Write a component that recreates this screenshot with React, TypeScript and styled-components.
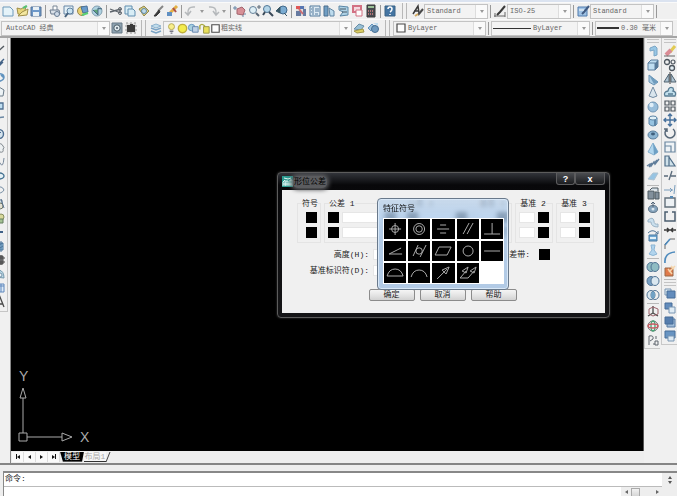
import React from "react";
import styled, { createGlobalStyle, css } from "styled-components";

const GlobalStyle = createGlobalStyle`
  * { box-sizing: border-box; }
  body {
    margin: 0;
    background: #f0f0f0;
    font-family: "Liberation Mono", "Noto Sans CJK SC", monospace;
    font-size: 7px;
    color: #222;
    overflow: hidden;
  }
  button, input, select { font: inherit; color: inherit; margin: 0; padding: 0; border: 0; background: none; border-radius: 0; }
`;

/* ---------- icon drawings, 14 x 14 ---------- */

const blue = "#4d86b8";
const pale = "#b9dcf2";
const navy = "#2d4f78";
const dark = "#3c444c";

const glyphs: Record<string, React.ReactNode> = {
  new: <path d="M2 3h7l3 3v6H2z" fill="#e4f4fb" stroke="#5d8fb5" />,
  open: <><path d="M2 4l4 1 5-3-2 9-6-1z" fill="#e7d26a" stroke="#958234" /><path d="M3 12l9-1 1-6-6 3z" fill="#f5e796" stroke="#958234" /><path d="M8 4l4-2" stroke="#4b6" strokeWidth="2" /></>,
  save: <><path d="M2 3h10v9H2z" fill="#5b8dc4" stroke="#40628d" /><path d="M4 3h6v3H4zM4 8h6v4H4z" fill="#e8f0f6" /></>,
  print: <><path d="M5 6V2h4v4" fill="#fff" stroke="#68788a" /><path d="M2 6h9l1 4H3z" fill="#d7dfe8" stroke="#5b6d82" /><circle cx="9" cy="10" r="2.5" fill="#cbd9e8" stroke="#566c86" /></>,
  preview: <><path d="M2 2h9v8H2z" fill="#e2f0f8" stroke="#55799c" /><circle cx="8" cy="7" r="3" fill="#c4e2f2" stroke="#4f7497" /><path d="M6 9l-3 4" stroke="#30506f" strokeWidth="2" /></>,
  publish: <><circle cx="6" cy="7" r="4.5" fill="#e7cc60" stroke="#8d7a39" /><path d="M5 3l6-1 1 6-5 1z" fill="#5791c7" stroke="#33608e" /><path d="M6 11l6-2" stroke="#4c6" strokeWidth="2" /></>,
  dwf: <><circle cx="7" cy="7" r="5" fill="#a8cfe0" stroke="#7395a8" /><path d="M3 6l5 5V4l4 1" fill="#4a9a6a" stroke="#357" /></>,
  cut: <><path d="M1 5l11 4M1 8l11-3" stroke="#4c535c" strokeWidth="1.3" /><circle cx="11" cy="5" r="1.5" fill="none" stroke="#4c535c" /><circle cx="11" cy="9" r="1.5" fill="none" stroke="#4c535c" /></>,
  copy: <><path d="M2 2h7v8H2z" fill="#d5edf7" stroke="#4f82a8" /><path d="M5 5h5l2 2v5H5z" fill="#d5edf7" stroke="#4f82a8" /></>,
  paste: <><path d="M2 5l5-3 5 5-5 5z" fill="#d5c86d" stroke="#887d3c" /><circle cx="7" cy="7" r="2.5" fill="#b8d9ea" stroke="#4c7a9d" /></>,
  brush: <><path d="M12 2L7 7" stroke="#777" strokeWidth="2" /><path d="M8 6l-5 6 2 0 4-4z" fill="#222" stroke="#222" /></>,
  pencil: <><path d="M12 2L5 9" stroke="#e2a82d" strokeWidth="3" /><path d="M8 4l3 4" stroke="#a13c37" strokeWidth="2" /><path d="M2 8h5v4H2z" fill="#4e83bd" /></>,
  undo: <path d="M11 3Q3 2 4 10M1 8l3 3 3-4" fill="none" stroke="#adb1b4" strokeWidth="1.5" />,
  redo: <path d="M3 3q8-1 7 7M7 7l3 4 3-3" fill="none" stroke="#adb1b4" strokeWidth="1.5" />,
  pan: <><path d="M2 2v4M0 4h4M10 8v5M8 10h5" stroke="#55799c" /><path d="M4 5l5-2 3 3-2 5-6-1z" fill="#d4828a" stroke="#9a525c" /></>,
  zoom: <><circle cx="6" cy="6" r="3.5" fill="#dceff7" stroke="#56748f" /><path d="M9 9l3 3" stroke="#456" strokeWidth="2" /><path d="M10 3h4M12 1v4" stroke="#456" /></>,
  zoomwin: <><circle cx="6" cy="5" r="3.5" fill="#acd2e7" stroke="#3b668b" /><path d="M8 8l4 4M4 8l-2 3" stroke="#234" strokeWidth="2" /></>,
  zoomprev: <><circle cx="8" cy="6" r="4" fill="#6ba3cf" stroke="#2c587f" /><path d="M1 7l4-4v6zM9 9l3 3" fill="#245" stroke="#245" /></>,
  props: <><path d="M2 2h10v10H2z" fill="#ddd" /><path d="M2 2h4v3H2z" fill="#d44" /><path d="M6 2h4v3H6z" fill="#46a" /><path d="M2 7h5v5H2zM9 5h3v7H9z" fill="#556b97" /><path d="M5 5l4 5" stroke="#ca5b62" strokeWidth="2" /></>,
  center: <><path d="M2 2h10v10H2z" fill="#dbeaf4" stroke="#3f6b92" /><path d="M5 3v8M7 5h4M7 7h4M7 10h3M3 5h1M3 8h1" stroke="#3f6b92" /></>,
  palette: <><path d="M2 2h4v10H2z" fill="#5f93bd" stroke="#355d80" /><path d="M7 4l5 3v5H8z" fill="#b7d9ed" stroke="#4b7597" /></>,
  sheet: <><path d="M3 2l9 1v8l-8 1 3-4-4-2z" fill="#a6cfe5" stroke="#47789c" /><path d="M4 5h6M6 8h5" stroke="#345" /></>,
  markup: <><path d="M3 2h8v6H3z" fill="#f5d5dc" stroke="#ce6074" strokeWidth="2" /><path d="M6 6h6v6H6z" fill="#fff" stroke="#ce6074" /></>,
  calc: <><path d="M3 1h8v12H3z" fill="#30343a" stroke="#222" /><path d="M4 3h6" stroke="#8fba8b" strokeWidth="2" /><path d="M4 7h6M4 10h6" stroke="#d57575" strokeWidth="1.5" strokeDasharray="1 1" /></>,
  help: <><path d="M2 2h10v10H2z" fill="#2d6599" stroke="#235078" /><path d="M5 5q0-2 2-2t2 2-2 3M7 10v1" fill="none" stroke="#fff" strokeWidth="1.5" /></>,
  textstyle: <><path d="M3 10L8 2l1 7M4 7h5" fill="none" stroke="#222" strokeWidth="1.5" /><path d="M13 5l-5 6" stroke="#333" strokeWidth="2" /><path d="M8 10l-3 2" stroke="#d0a14d" strokeWidth="2" /></>,
  dimstyle: <><path d="M1 12h11M2 9v4M12 8v5" stroke="#555" /><path d="M12 2L7 8l-3 3" stroke="#222" strokeWidth="2" fill="none" /></>,
  tablestyle: <><path d="M2 3h9v9H2z" fill="#95bde4" stroke="#3d6ca5" /><path d="M13 2L8 8l-2 2" stroke="#294773" strokeWidth="2" /><path d="M3 6h5" stroke="#fff" /></>,
  gear: <><path d="M2 2h10v10H2z" fill="#8199aa" stroke="#546979" /><circle cx="7" cy="7" r="3.2" fill="#dce7ed" stroke="#334854" /><circle cx="7" cy="7" r="1" fill="#345" /></>,
  workspace: <><path d="M2 2h10v10H2z" fill="#dadada" stroke="#8c8c8c" strokeDasharray="2 2" /><path d="M3 4h3V3h3v1h2v7H3z" fill="#222" /></>,
  layers: <><path d="M2 5l5-2 5 2-5 2z" fill="#bcdced" stroke="#7fa9c9" /><path d="M2 7l5 2 5-2M2 10l5 2 5-2" fill="none" stroke="#6a9ac0" strokeWidth="1.5" /></>,
  bulb: <><circle cx="7" cy="5" r="3.2" fill="#f9ee7c" stroke="#a99a3d" /><path d="M5 10h4M6 12h2" stroke="#667" strokeWidth="1.5" /></>,
  sun: <circle cx="7" cy="7" r="4.5" fill="#f3ec37" stroke="#b9a621" strokeWidth="1.5" />,
  freeze: <><circle cx="5" cy="6" r="3.5" fill="#9dccdd" stroke={blue} /><path d="M6 5h6v6H6z" fill="#b8cee5" stroke="#5378a4" /></>,
  lock: <><path d="M2 8V4q2-3 5 0v4" fill="none" stroke="#a1a12b" strokeWidth="1.5" /><path d="M6 5h6v7H6z" fill="#e7dd45" stroke="#89862b" /></>,
  swatch: <path d="M3 3h8v8H3z" fill="#fff" stroke="#333" strokeWidth="1.2" />,
  layerprev: <><path d="M2 8l5-5 5 2-3 4z" fill="#8db9d1" stroke="#55809e" /><path d="M2 10l9-2 1 3-7 1z" fill="#d9ca50" stroke="#968b34" /></>,
  layerstate: <><path d="M2 7l4-4 2 2-3 5z" fill="#94bdd9" stroke={blue} /><circle cx="9" cy="8" r="3.5" fill="#5f8fb8" stroke="#315d85" /><path d="M7 2h5v3" fill="#bddbed" /></>,

  line: <path d="M2 12L12 3" stroke={dark} strokeWidth="1.4" />,
  ray: <path d="M2 12L12 2M6 10l5-5" stroke={navy} strokeWidth="1.4" />,
  polyline: <path d="M4 3q8-1 8 3t-8 5M9 4l3 3" fill="none" stroke={blue} strokeWidth="1.5" />,
  polygon: <path d="M7 2l5 3-1 6H3L2 5z" fill="#edf4f7" stroke="#586b7b" />,
  rect: <path d="M2 4h9v6H2z" fill={pale} stroke="#385d84" strokeWidth="1.3" />,
  arc: <path d="M3 11q1-7 9-7" fill="none" stroke="#587999" strokeWidth="1.4" />,
  circle: <><circle cx="7" cy="7" r="4.5" fill="#d3e3ee" stroke="#365b83" strokeWidth="1.4" /><path d="M5 9l4-4" stroke="#365b83" /></>,
  cloud: <path d="M4 11q-3-1-1-4 0-3 3-3 3-3 5 1 2 2 0 3 1 4-3 3z" fill="#edf0f2" stroke="#707980" />,
  spline: <path d="M2 11q3-9 6-3t4-5" fill="none" stroke="#687b91" />,
  ellipse: <ellipse cx="7" cy="7" rx="5" ry="3" fill="#e3f1f7" stroke="#2d6185" strokeWidth="1.4" />,
  ellarc: <path d="M3 10q7 1 9-3-2-5-8-2" fill="none" stroke="#66819a" />,
  insert: <><path d="M3 3h7v6H3z" fill="#cddce4" stroke="#607785" /><circle cx="8" cy="9" r="3" fill="#e2ded0" stroke="#5e6755" /><path d="M9 2l3 9" stroke="#486586" /></>,
  block: <><circle cx="9" cy="6" r="3" fill="#d5d58f" stroke="#78804c" /><path d="M5 8h6v4H5z" fill="#9bbc88" stroke="#536f4c" /></>,
  point: <path d="M7 7h4" stroke="#284e79" strokeWidth="2" />,
  hatch: <><path d="M3 4h8v7H3z" fill="#8abde1" stroke="#36658e" /><path d="M3 8l8-4M5 11l6-4M9 2v11" stroke="#36658e" /></>,
  gradient: <><path d="M3 3h8v8H3z" fill="#72767b" stroke="#333" /><path d="M9 2v10M3 5h10M3 9h10" stroke="#333" /></>,
  region: <><path d="M3 10q-2-6 4-7 5 1 5 8z" fill="#b5d8e8" stroke="#658ba1" /><circle cx="8" cy="8" r="2" fill="#edf5f8" stroke="#6687a0" /></>,
  table: <><path d="M2 3h10v8H2z" fill="#daeaf9" stroke="#4c7bb6" /><path d="M2 5h10M6 3v8M9 3v8" stroke="#4c7bb6" /></>,
  mtext: <path d="M4 12L8 2l4 10M5 9h6" fill="none" stroke="#333" strokeWidth="1.3" />,

  polysolid: <path d="M4 4l5-2 2 2v7l-3 1V6L4 7z" fill="#8dc2e4" stroke="#6b9cc0" />,
  box: <><path d="M2 5l3-3h7v7l-3 3H2z" fill={pale} stroke="#476f92" /><path d="M9 5l3-3v7l-3 3z" fill="#446b8e" /><path d="M2 5h7v7" fill="none" stroke="#476f92" /></>,
  wedge: <><path d="M3 3v7l5 3 4-3z" fill="#a3cae4" stroke="#5887ab" /><path d="M3 3l9 7-4 2z" fill="#5e91b7" /></>,
  cone: <path d="M7 1l4 9q-4 3-8 0z" fill="#d6e4ed" stroke="#64809a" />,
  sphere: <><circle cx="7" cy="7" r="5" fill="#8bb7d8" stroke="#5c87ab" /><circle cx="5.5" cy="5" r="2.2" fill="#dceefa" /></>,
  cylinder: <><path d="M3 4v6q4 4 8 0V4z" fill="#8abde0" stroke="#48779d" /><ellipse cx="7" cy="4" rx="4" ry="2" fill="#e0f0f9" stroke="#48779d" /><path d="M9 6v6" stroke="#48779d" strokeWidth="2" /></>,
  torus: <><ellipse cx="7" cy="7" rx="5" ry="4" fill="#7fadcf" stroke="#456f92" /><ellipse cx="7" cy="6" rx="2" ry="1.4" fill="#264c6e" /></>,
  pyramid: <><path d="M7 1l5 9-4 3-6-3z" fill="#a8d3ee" stroke="#78a8ca" /><path d="M7 1l5 9-4 3z" fill="#5d96bf" /></>,
  helix: <path d="M1 10l3-2 1 2 3-4 1 2 4-5M3 11l3-4M8 8l3-4" fill="none" stroke="#4e6f90" strokeWidth="1.5" />,
  plane: <path d="M2 9l5-6h5l-4 7z" fill="#8bbfe2" stroke="#a5bccd" />,
  extrude: <><path d="M2 4h6v8H2zM9 5h4v7H9z" fill="#738391" stroke="#39464f" /><path d="M4 3l2-2h6v3" fill="#d6e2eb" stroke="#39464f" /></>,
  presspull: <><ellipse cx="7" cy="8" rx="4.5" ry="3.5" fill="#7799b5" stroke="#4c657b" /><path d="M7 1v6M5 3l2-2 2 2" stroke="#3c5167" fill="none" /><circle cx="7" cy="8" r="1.5" fill="#d6e5ef" /></>,
  sweep: <path d="M2 5q5-4 6 1 0 4 4 3v3q-7 0-7-5H2z" fill="#c5dded" stroke="#91acc1" />,
  revolve: <><path d="M3 6h8v6H3z" fill="#5d9dce" stroke="#346d99" /><path d="M2 4q4-4 8-1l2 2M9 5h3V2" fill="none" stroke="#40698c" /><path d="M4 9h6" stroke="#e0f0f8" strokeWidth="2" /></>,
  loft: <path d="M5 2h4l-1 5 3 4q-4 3-8 0l3-4z" fill="#a9d1ed" stroke="#7eacd0" />,
  union: <><ellipse cx="5" cy="7" rx="4" ry="4.5" fill="#82b5bd" stroke="#3c6388" /><ellipse cx="9" cy="7" rx="4" ry="4.5" fill="#82b5bd" stroke="#3c6388" /></>,
  subtract: <><ellipse cx="5" cy="7" rx="4" ry="4.5" fill="#6796be" stroke="#3c6388" /><ellipse cx="9" cy="7" rx="4" ry="4.5" fill="#d7e6ef" stroke="#3c6388" /></>,
  intersect: <><ellipse cx="5" cy="7" rx="4" ry="4.5" fill="#d7e6ef" stroke="#3c6388" /><ellipse cx="9" cy="7" rx="4" ry="4.5" fill="none" stroke="#3c6388" /><ellipse cx="7" cy="7" rx="1.8" ry="3.5" fill="#5e98c1" /></>,
  move3d: <><path d="M7 1v7L2 11M7 8l5 3" stroke="#333" fill="none" strokeWidth="1.3" /><path d="M3 4l4-2 5 2v5l-5 2-4-2z" stroke="#94525b" fill="none" /></>,
  rotate3d: <><circle cx="7" cy="7" r="5" fill="none" stroke="#555" /><ellipse cx="7" cy="7" rx="2" ry="5" fill="none" stroke="#2e9d66" strokeWidth="1.3" /><ellipse cx="7" cy="7" rx="5" ry="2" fill="none" stroke="#c4454c" strokeWidth="1.3" /></>,
  align3d: <path d="M3 12V3q5-1 4 3L4 8M10 3v3M9 8h3v4H9zM7 11h2" fill="none" stroke="#4b535d" />,

  erase: <><path d="M12 2L7 8" stroke="#e0c63f" strokeWidth="3" /><path d="M8 6L3 11" stroke="#d77f89" strokeWidth="4" /><path d="M1 12h11" stroke="#555" /></>,
  copyobj: <><circle cx="4" cy="4" r="2.5" fill="none" stroke="#37414b" strokeWidth="1.3" /><circle cx="10" cy="4" r="2" fill="none" stroke="#37414b" strokeWidth="1.2" /><circle cx="9" cy="10" r="2.5" fill="#e2eef5" stroke="#37414b" strokeWidth="1.3" /></>,
  mirror: <><path d="M6 3v8H1zM8 3v8h5z" fill="#a5bdcd" stroke="#3c505f" /><path d="M7 1v12" stroke="#222" /></>,
  offset: <path d="M2 11q-2-4 3-5 1-5 5-3 1 2 0 3 4 1 2 5zM5 9h5" fill="#bbddec" stroke="#446d87" strokeWidth="1.3" />,
  array: <path d="M2 2h4v4H2zM8 2h4v4H8zM2 8h4v4H2zM8 8h4v4H8z" fill="none" stroke="#39434b" strokeWidth="1.2" />,
  move: <path d="M7 1v12M1 7h12M5 3l2-2 2 2M5 11l2 2 2-2M3 5L1 7l2 2M11 5l2 2-2 2" fill="none" stroke="#2f5f91" strokeWidth="1.4" />,
  rotate: <path d="M4 3a5 5 0 1 0 6 0M4 6V3H1" fill="none" stroke="#425568" strokeWidth="1.5" />,
  scale: <path d="M2 2h10v10H2zM2 6h6v6" fill="#eff4f7" stroke="#597995" strokeWidth="1.2" />,
  stretch: <path d="M2 2h4v10H2zM6 3l6 9H6" fill="#cbdfea" stroke="#385b79" strokeWidth="1.2" />,
  trim: <path d="M1 8h4M8 8h5M6 12l3-9" stroke="#45586a" strokeWidth="1.3" />,
  extend: <path d="M1 8h9M11 12l1-9M7 6l2 2-2 2" fill="none" stroke="#6a93b6" />,
  breakpt: <><path d="M2 3h10v9H2z" fill="#edf2f5" stroke="#4e5d69" strokeWidth="1.4" /><path d="M7 2h3" stroke="#427cb0" strokeWidth="2" /></>,
  break: <path d="M5 3H2v9h10V3H9" fill="none" stroke="#354a5d" strokeWidth="1.5" />,
  join: <path d="M1 7h12M4 5l2 2-2 2M10 5L8 7l2 2" fill="none" stroke="#222" strokeWidth="1.5" />,
  chamfer: <><path d="M2 12V7l5-5h5" fill="none" stroke="#555" /><path d="M2 8l5-6" stroke="#397eb7" strokeWidth="1.6" /></>,
  fillet: <path d="M2 13q-1-10 10-11" fill="none" stroke="#397eb7" strokeWidth="1.7" />,
  explode: <><path d="M2 4h8v8H2z" fill="#df6c35" stroke="#8d5633" /><path d="M6 8l6-6M5 5l4 5M8 2l3 3" stroke="#f7d3a4" strokeWidth="1.5" /></>,
  front: <><path d="M2 2h6v6H2z" fill="#ddebf5" stroke="#6889aa" /><path d="M4 4h8v7H4z" fill="#4f7fb5" stroke="#315c8d" /></>,
  back: <><path d="M2 2h7v6H2z" fill="#4f7fb5" stroke="#315c8d" /><path d="M6 6h6v6H6z" fill="#ddebf5" stroke="#6889aa" /></>,
  above: <><path d="M4 4h8v8H4z" fill="#93b4d5" stroke="#426b97" /><path d="M2 2h8v7H2z" fill="#416fa5" stroke="#315c8d" /></>,
  under: <><path d="M2 2h10v7H2z" fill="#5688bc" stroke="#315c8d" /><path d="M5 7h6v5H5z" fill="#dbe9f4" stroke="#6889aa" /></>,
};

const Glyph = styled.svg`
  display: block;
  width: 14px;
  height: 14px;
  flex: none;
  opacity: 0.88;
`;

const Icon = ({ name }: { name: string }) => (
  <Glyph viewBox="0 0 14 14" aria-hidden="true">{glyphs[name]}</Glyph>
);

/* ---------- top toolbars ---------- */

const Page = styled.main`
  min-height: 100vh;
  display: grid;
  grid-template-rows: auto 1fr auto;
`;

const Header = styled.header`
  border-top: 2px solid #dbe3f0;
  border-bottom: 2px solid #a5a5a5;
`;

const ToolRow = styled.div`
  display: flex;
  align-items: center;
  height: 17px;
  padding-left: 1px;
  overflow: hidden;
  border-top: 1px solid #fafafa;
`;

const ToolButton = styled.button<{ $narrow?: boolean }>`
  display: flex;
  align-items: center;
  justify-content: center;
  flex: none;
  width: ${(p) => (p.$narrow ? 8 : 14)}px;
  height: 14px;
`;

const Divider = styled.span`
  flex: none;
  width: 1px;
  height: 13px;
  margin: 0 2px;
  background: #999;
`;

const Grip = styled.span`
  flex: none;
  width: 5px;
  height: 16px;
  margin: 0 3px;
  border: solid #b8b8b8;
  border-width: 0 1px;
`;

const Arrow = styled.span<{ $dir?: "up" | "down" | "left" | "right"; $color?: string }>`
  width: 0;
  height: 0;
  border: 2px solid transparent;
  ${(p) => {
    const c = p.$color ?? "#999";
    switch (p.$dir) {
      case "up": return css`border-bottom: 3px solid ${c}; border-top: 0;`;
      case "left": return css`border-right: 3px solid ${c}; border-left: 0;`;
      case "right": return css`border-left: 3px solid ${c}; border-right: 0;`;
      default: return css`border-top: 3px solid ${c}; border-bottom: 0;`;
    }
  }}
`;

const ComboBox = styled.label<{ $width: number }>`
  display: flex;
  align-items: center;
  flex: none;
  width: ${(p) => p.$width}px;
  height: 15px;
  background: #f3f3f3;
  border: 1px solid #c3c3c3;
  color: #666;
`;

const ComboSelect = styled.select`
  appearance: none;
  flex: 1;
  min-width: 0;
  height: 13px;
  outline: 0;
`;

const ComboArrow = styled.span`
  display: flex;
  align-items: center;
  justify-content: center;
  width: 12px;
  height: 13px;
  background: #fafafa;
  border-left: 1px solid #ddd;
`;

const Stroke = styled.span<{ $width: number; $weight: number }>`
  width: ${(p) => p.$width}px;
  height: ${(p) => p.$weight}px;
  margin: 0 2px 0 1px;
  background: #333;
`;

const Inset = styled.span`
  flex: none;
  width: 2px;
`;

const Combo = ({ width, value, label, children }: { width: number; value: string; label: string; children?: React.ReactNode }) => (
  <ComboBox $width={width}>
    {children ?? <Inset />}
    <ComboSelect aria-label={label} defaultValue={value}><option>{value}</option></ComboSelect>
    <ComboArrow><Arrow /></ComboArrow>
  </ComboBox>
);

const FlagRow = styled.span`
  display: flex;
  padding: 0 1px;
  & > svg { width: 13px; height: 13px; margin-right: -2px; }
`;

const Tools = ({ names }: { names: string[] }) => (
  <>
    {names.map((n, i) =>
      n === "|" ? <Divider key={i} /> :
      n === "v" ? <ToolButton key={i} $narrow aria-label="more"><Arrow /></ToolButton> :
      <ToolButton key={i} aria-label={n}><Icon name={n} /></ToolButton>
    )}
  </>
);

/* ---------- side toolbars ---------- */

const Workspace = styled.div`
  display: grid;
  grid-template-columns: 10px 1fr 33px;
  min-height: 0;
`;

const Side = styled.aside`
  display: flex;
  align-items: flex-start;
  gap: 1px;
`;

const LeftBar = styled.div`
  display: flex;
  flex-direction: column;
  align-items: flex-end;
  width: 8px;
  padding: 5px 1px 2px 0;
  overflow: hidden;
  border: solid #c5c5c5;
  border-width: 0 1px 1px 0;
`;

const RightBar = styled.div`
  display: flex;
  flex-direction: column;
  align-items: center;
  width: 16px;
  padding-bottom: 1px;
  border: solid #c8c8c8;
  border-width: 0 0 1px 1px;
`;

const BarGrip = styled.span`
  width: 12px;
  height: 4px;
  margin: 1px 0;
  border: solid #c4c4c4;
  border-width: 1px 0;
`;

const BarDivider = styled.span`
  width: 12px;
  height: 1px;
  margin: 1px 0;
  background: #b8b8b8;
`;

const ToolStack = styled.div<{ $height?: number }>`
  display: flex;
  flex-direction: column;
  justify-content: space-between;
  ${(p) => p.$height && css`height: ${p.$height}px;`}
  & > button { flex: 0 1 14px; min-height: 0; }
`;

const Stack = ({ names, height }: { names: string[]; height?: number }) => (
  <ToolStack $height={height}>
    {names.map((n) => <ToolButton key={n} aria-label={n}><Icon name={n} /></ToolButton>)}
  </ToolStack>
);

/* ---------- drawing area ---------- */

const DrawingColumn = styled.div`
  display: flex;
  flex-direction: column;
  border-left: 1px solid #888;
`;

const Canvas = styled.section`
  position: relative;
  flex: 1;
  background: #000;
  border-right: 1px solid #555;
`;

const Ucs = styled.svg`
  position: absolute;
  left: 7px;
  bottom: 1px;
  width: 80px;
  height: 84px;
  font-family: "Liberation Sans", sans-serif;
  font-size: 14px;
`;

const TabStrip = styled.nav`
  display: flex;
  align-items: center;
  height: 12px;
  padding: 0 0 1px 1px;
  background: #eee;
`;

const PageButton = styled.button`
  display: flex;
  align-items: center;
  justify-content: center;
  width: 12px;
  height: 10px;
  background: #fafafa;
  border-right: 1px solid #ddd;
`;

const EndBar = styled.span`
  width: 1px;
  height: 5px;
  background: #111;
`;

const SheetTab = styled.button<{ $active?: boolean }>`
  height: 10px;
  width: ${(p) => (p.$active ? 24 : 22)}px;
  line-height: 10px;
  font-size: 8px;
  white-space: nowrap;
  color: ${(p) => (p.$active ? "#fff" : "#aaa")};
  background: ${(p) => (p.$active ? "#000" : "#f6f6f6")};
  clip-path: ${(p) => (p.$active ? "polygon(0 0, 100% 0, 92% 100%, 12% 100%)" : "none")};
  border-bottom: 1px solid #333;
`;

const TabEdge = styled.svg`
  width: 5px;
  height: 10px;
`;

/* ---------- tolerance dialog ---------- */

const Dialog = styled.section`
  position: absolute;
  left: 266px;
  top: 134px;
  width: 333px;
  padding: 0 4px 4px;
  border: 1px solid #5c5c5c;
  border-radius: 4px;
  background: linear-gradient(#32343a, #08080a 12px, #151517);
  box-shadow: 0 0 2px #444;
  font-size: 8px;
`;

const TitleBar = styled.header`
  display: flex;
  align-items: center;
  height: 17px;
`;

const AppMark = styled.svg`
  width: 11px;
  height: 11px;
`;

const Title = styled.h1`
  margin: 0;
  padding: 0 1px;
  flex: none;
  font-size: 8px;
  font-weight: 400;
  line-height: 12px;
  color: #000;
  background: #5b5c5f;
  border-radius: 5px;
  box-shadow: 0 0 4px 2px #5b5c5f;
`;

const Captions = styled.div`
  display: flex;
  align-self: flex-start;
  margin-left: auto;
`;

const CaptionButton = styled.button<{ $wide?: boolean }>`
  width: ${(p) => (p.$wide ? 30 : 19)}px;
  height: 12px;
  color: #fff;
  font: bold 9px/10px "Liberation Sans", sans-serif;
  background: linear-gradient(#4b4d51, #1c1d20);
  border: 1px solid #5c5c5e;
  border-top: 0;
  border-radius: 0 0 3px 3px;
`;

const DialogBody = styled.form`
  padding: 7px 11px 12px 15px;
  background: #f0f0f0;
`;

const GroupRow = styled.div`
  display: flex;
  gap: 3px;
`;

const Group = styled.fieldset<{ $width: number }>`
  display: flex;
  flex-direction: column;
  gap: 4px;
  width: ${(p) => p.$width}px;
  min-width: 0;
  margin: 0;
  padding: 2px 3px 4px;
  border: 1px solid #e4e4e4;
`;

const Legend = styled.legend`
  margin-left: 1px;
  padding: 0;
  line-height: 13px;
  white-space: nowrap;
`;

const Cells = styled.div<{ $end?: boolean }>`
  display: flex;
  gap: 3px;
  justify-content: ${(p) => (p.$end ? "flex-end" : "flex-start")};
`;

const BlackBox = styled.button`
  flex: none;
  width: 11px;
  height: 11px;
  background: #000;
`;

const TextBox = styled.input`
  flex: 1;
  min-width: 0;
  height: 11px;
  background: #fff;
  border: 1px solid #e6e6e6;
`;

const FormGrid = styled.div`
  display: grid;
  grid-template-columns: 72px 60px 1fr 60px;
  column-gap: 4px;
  row-gap: 5px;
  align-items: center;
  margin-top: 6px;
`;

const FieldLabel = styled.label`
  line-height: 11px;
  text-align: right;
  white-space: nowrap;
`;

const Actions = styled.div`
  display: flex;
  justify-content: center;
  gap: 5px;
  margin: 13px 6px 0 0;
`;

const PushButton = styled.button`
  width: 46px;
  height: 12px;
  line-height: 10px;
  background: linear-gradient(#f5f5f5, #e5e5e5 50%, #d2d2d2);
  border: 1px solid #8b8b8b;
  border-radius: 2px;
`;

/* ---------- symbol palette ---------- */

const SymbolWindow = styled.section`
  position: absolute;
  left: 99px;
  top: 25px;
  width: 132px;
  padding: 0 4px 5px 5px;
  border: 1px solid #69798b;
  border-radius: 4px;
  background: linear-gradient(rgba(188, 210, 234, 0.75), rgba(171, 202, 235, 0.8) 20px, rgba(176, 201, 229, 0.97) 40px);
  backdrop-filter: blur(2px);
  box-shadow: inset 0 0 0 1px #d9e8f7;
`;

const SymbolTitle = styled.h2`
  margin: 0;
  font-size: 8px;
  font-weight: 400;
  line-height: 19px;
  color: #111;
`;

const SymbolGrid = styled.div`
  display: grid;
  grid-template-columns: repeat(5, 1fr);
  gap: 2px;
  padding: 1px;
  background: #fff;
`;

const SymbolButton = styled.button<{ $empty?: boolean }>`
  height: 20px;
  background: ${(p) => (p.$empty ? "#fff" : "#000")};
  & > svg { display: block; width: 100%; height: 100%; fill: none; stroke: #aaa; }
`;

const symbols: [string, React.ReactNode][] = [
  ["position", <><circle cx="11" cy="10" r="3.5" /><path d="M5 10h12M11 4v12" /></>],
  ["concentricity", <><circle cx="11" cy="10" r="5.5" /><circle cx="11" cy="10" r="3.2" /></>],
  ["symmetry", <path d="M8 6h6M5 10h12M8 14h6" />],
  ["parallelism", <path d="M6 15L12 4M10 15L16 4" />],
  ["perpendicularity", <path d="M11 4v11M3 15h16" />],
  ["angularity", <path d="M17 7L5 13h13" />],
  ["cylindricity", <><circle cx="11" cy="10" r="3.2" /><path d="M5 15L10 4M12 16L18 4" /></>],
  ["flatness", <path d="M3 14L7 6h12l-4 8z" />],
  ["circularity", <circle cx="11" cy="10" r="5" />],
  ["straightness", <path d="M3 10h16" />],
  ["surface profile", <path d="M3 13q2-7 8-7t8 7z" />],
  ["line profile", <path d="M3 14q2-7 8-7t8 7" />],
  ["circular runout", <path d="M5 16L15 6M10 7l7-3-3 7z" />],
  ["total runout", <path d="M3 15L9 8M3 15h8L17 8M5 8l6-4-2 6zM13 8l6-4-2 6z" />],
];

const tools = {
  left: ["line", "ray", "polyline", "polygon", "rect", "arc", "circle", "cloud", "spline", "ellipse", "ellarc", "insert", "block", "point", "hatch", "gradient", "region", "table", "mtext"],
  modify: ["erase", "copyobj", "mirror", "offset", "array", "move", "rotate", "scale", "stretch", "trim", "extend", "breakpt", "break", "join", "chamfer", "fillet", "explode"],
};

const TolGroup = ({ title, width, kind }: { title: string; width: number; kind: "symbol" | "tolerance" | "datum" }) => (
  <Group $width={width}>
    <Legend>{title}</Legend>
    {[1, 2].map((row) => (
      <Cells key={row} $end={kind === "symbol"}>
        {kind === "tolerance" && <BlackBox type="button" aria-label={`${title} 直径 ${row}`} />}
        {kind !== "symbol" && <TextBox aria-label={`${title} ${row}`} />}
        <BlackBox type="button" aria-label={`${title} 符号 ${row}`} />
      </Cells>
    ))}
  </Group>
);

/* ---------- command line ---------- */

const CommandArea = styled.footer`
  height: 33px;
  padding: 6px 0 0 3px;
  border-top: 2px solid #858585;
  background: #eee;
`;

const CommandBox = styled.div`
  display: grid;
  grid-template-columns: 1fr auto;
  border: solid #888;
  border-width: 2px 0 0 1px;
  height: 26px;
  background: #eee;
`;

const History = styled.output`
  height: 14px;
  padding-left: 1px;
  font-size: 8px;
  line-height: 11px;
  background: #fff;
  border-bottom: 1px solid #bbb;
`;

const Spinner = styled.div`
  display: flex;
  flex-direction: column;
  align-items: center;
  justify-content: space-evenly;
  width: 15px;
  height: 14px;
`;

const InputLine = styled.div`
  grid-column: 1 / -1;
  display: flex;
  align-items: center;
  height: 10px;
`;

const CommandInput = styled.input`
  flex: 1;
  height: 10px;
  background: #fff;
  outline: 0;
`;

const Scroller = styled.div`
  display: flex;
  align-items: center;
  width: 56px;
  height: 10px;
  padding: 0 18px 0 4px;
  gap: 3px;
`;

const Thumb = styled.button`
  width: 9px;
  height: 9px;
  background: linear-gradient(#f2f2f2, #d5d5d5);
  border: 1px solid #aaa;
`;

const Spring = styled.span`
  flex: 1;
`;

export default function App() {
  return (
    <Page>
      <GlobalStyle />
      <Header>
        <ToolRow>
          <Tools names={["new", "open", "save", "|", "print", "preview", "publish", "dwf", "|", "cut", "copy", "paste", "brush", "pencil", "|", "undo", "v", "redo", "v", "|", "pan", "zoom", "zoomwin", "zoomprev", "|", "props", "center", "palette", "sheet", "markup", "calc", "|", "help"]} />
          <Inset />
          <Grip />
          <Tools names={["textstyle"]} />
          <Combo width={64} value="Standard" label="文字样式" />
          <Tools names={["|", "dimstyle"]} />
          <Combo width={64} value="ISO-25" label="标注样式" />
          <Tools names={["|", "tablestyle"]} />
          <Combo width={64} value="Standard" label="表格样式" />
          <Divider />
        </ToolRow>
        <ToolRow>
          <Combo width={109} value="AutoCAD 经典" label="工作空间"><Inset /><Inset /></Combo>
          <Tools names={["gear", "workspace"]} />
          <Grip />
          <Tools names={["layers"]} />
          <Combo width={189} value="粗实线" label="图层">
            <FlagRow>
              <Icon name="bulb" /><Icon name="sun" /><Icon name="freeze" /><Icon name="lock" /><Icon name="swatch" />
            </FlagRow>
          </Combo>
          <Tools names={["layerprev", "layerstate"]} />
          <Inset />
          <Grip />
          <Combo width={93} value="ByLayer" label="颜色"><Icon name="swatch" /></Combo>
          <Divider />
          <Combo width={99} value="ByLayer" label="线型"><Stroke $width={38} $weight={1} /></Combo>
          <Divider />
          <Combo width={78} value="0.30 毫米" label="线宽"><Stroke $width={22} $weight={2} /></Combo>
        </ToolRow>
      </Header>

      <Workspace>
        <Side>
          <LeftBar><Stack names={tools.left} /></LeftBar>
        </Side>
        <DrawingColumn>
          <Canvas>
            <Ucs viewBox="0 0 80 84" fill="none" stroke="#aaa">
              <path d="M1 67h8v8H1zM5 67V32M2 32l3-10 3 10zM9 71h35M44 67l10 4-10 4z" />
              <text x="1" y="15" fill="#aaa" stroke="none">Y</text>
              <text x="62" y="76" fill="#aaa" stroke="none">X</text>
            </Ucs>
            <Dialog role="dialog" aria-label="形位公差">
              <TitleBar>
                <AppMark viewBox="0 0 11 11" aria-hidden="true">
                  <path d="M0 0h11v11H0z" fill="#2c9b90" />
                  <path d="M1 10V6l2-2v6M4 10V5h2v5M8 10V4h2v6M2 2l4 1 3-1M1 8h9" fill="none" stroke="#e5f7f5" />
                </AppMark>
                <Title>形位公差</Title>
                <Captions>
                  <CaptionButton aria-label="帮助">?</CaptionButton>
                  <CaptionButton $wide aria-label="关闭">x</CaptionButton>
                </Captions>
              </TitleBar>
              <DialogBody onSubmit={(e) => e.preventDefault()}>
                <GroupRow>
                  <TolGroup title="符号" width={24} kind="symbol" />
                  <TolGroup title="公差 1" width={76} kind="tolerance" />
                  <TolGroup title="公差 2" width={69} kind="tolerance" />
                  <TolGroup title="基准 1" width={38} kind="datum" />
                  <TolGroup title="基准 2" width={38} kind="datum" />
                  <TolGroup title="基准 3" width={38} kind="datum" />
                </GroupRow>
                <FormGrid>
                  <FieldLabel htmlFor="height">高度(H):</FieldLabel>
                  <TextBox id="height" />
                  <FieldLabel htmlFor="zone">投影公差带:</FieldLabel>
                  <Cells><Inset /><BlackBox id="zone" type="button" /></Cells>
                  <FieldLabel htmlFor="datum">基准标识符(D):</FieldLabel>
                  <TextBox id="datum" />
                </FormGrid>
                <Actions>
                  <PushButton type="button">确定</PushButton>
                  <PushButton type="button">取消</PushButton>
                  <PushButton type="button">帮助</PushButton>
                </Actions>
              </DialogBody>
              <SymbolWindow role="dialog" aria-label="特征符号">
                <SymbolTitle>特征符号</SymbolTitle>
                <SymbolGrid>
                  {symbols.map(([name, art]) => (
                    <SymbolButton key={name} aria-label={name}><svg viewBox="0 0 22 20">{art}</svg></SymbolButton>
                  ))}
                  <SymbolButton $empty aria-label="none" />
                </SymbolGrid>
              </SymbolWindow>
            </Dialog>
          </Canvas>
          <TabStrip>
            <PageButton aria-label="first"><EndBar /><Arrow $dir="left" $color="#111" /></PageButton>
            <PageButton aria-label="previous"><Arrow $dir="left" $color="#111" /></PageButton>
            <PageButton aria-label="next"><Arrow $dir="right" $color="#111" /></PageButton>
            <PageButton aria-label="last"><Arrow $dir="right" $color="#111" /><EndBar /></PageButton>
            <SheetTab $active>模型</SheetTab>
            <SheetTab>布局1</SheetTab>
            <TabEdge viewBox="0 0 5 10"><path d="M4 0L0 10" stroke="#444" /></TabEdge>
          </TabStrip>
        </DrawingColumn>
        <Side>
          <RightBar>
            <BarGrip />
            <Stack names={["polysolid", "box", "wedge", "cone", "sphere", "cylinder", "torus", "pyramid", "helix", "plane"]} />
            <BarDivider />
            <Stack names={["extrude", "presspull", "sweep", "revolve", "loft"]} />
            <BarDivider />
            <Stack names={["union", "subtract", "intersect"]} />
            <BarDivider />
            <Stack names={["move3d", "rotate3d", "align3d"]} />
          </RightBar>
          <RightBar>
            <BarGrip />
            <Stack names={tools.modify} height={234} />
            <BarDivider />
            <BarGrip />
            <Stack names={["front", "back", "above", "under"]} />
          </RightBar>
        </Side>
      </Workspace>

      <CommandArea>
        <CommandBox>
          <History>命令:</History>
          <Spinner><Arrow $dir="up" $color="#555" /><Arrow $color="#555" /></Spinner>
          <InputLine>
            <CommandInput aria-label="命令" />
            <Scroller>
              <Arrow $dir="left" $color="#666" />
              <Thumb aria-label="scroll" />
              <Spring />
              <Arrow $dir="right" $color="#666" />
            </Scroller>
          </InputLine>
        </CommandBox>
      </CommandArea>
    </Page>
  );
}
